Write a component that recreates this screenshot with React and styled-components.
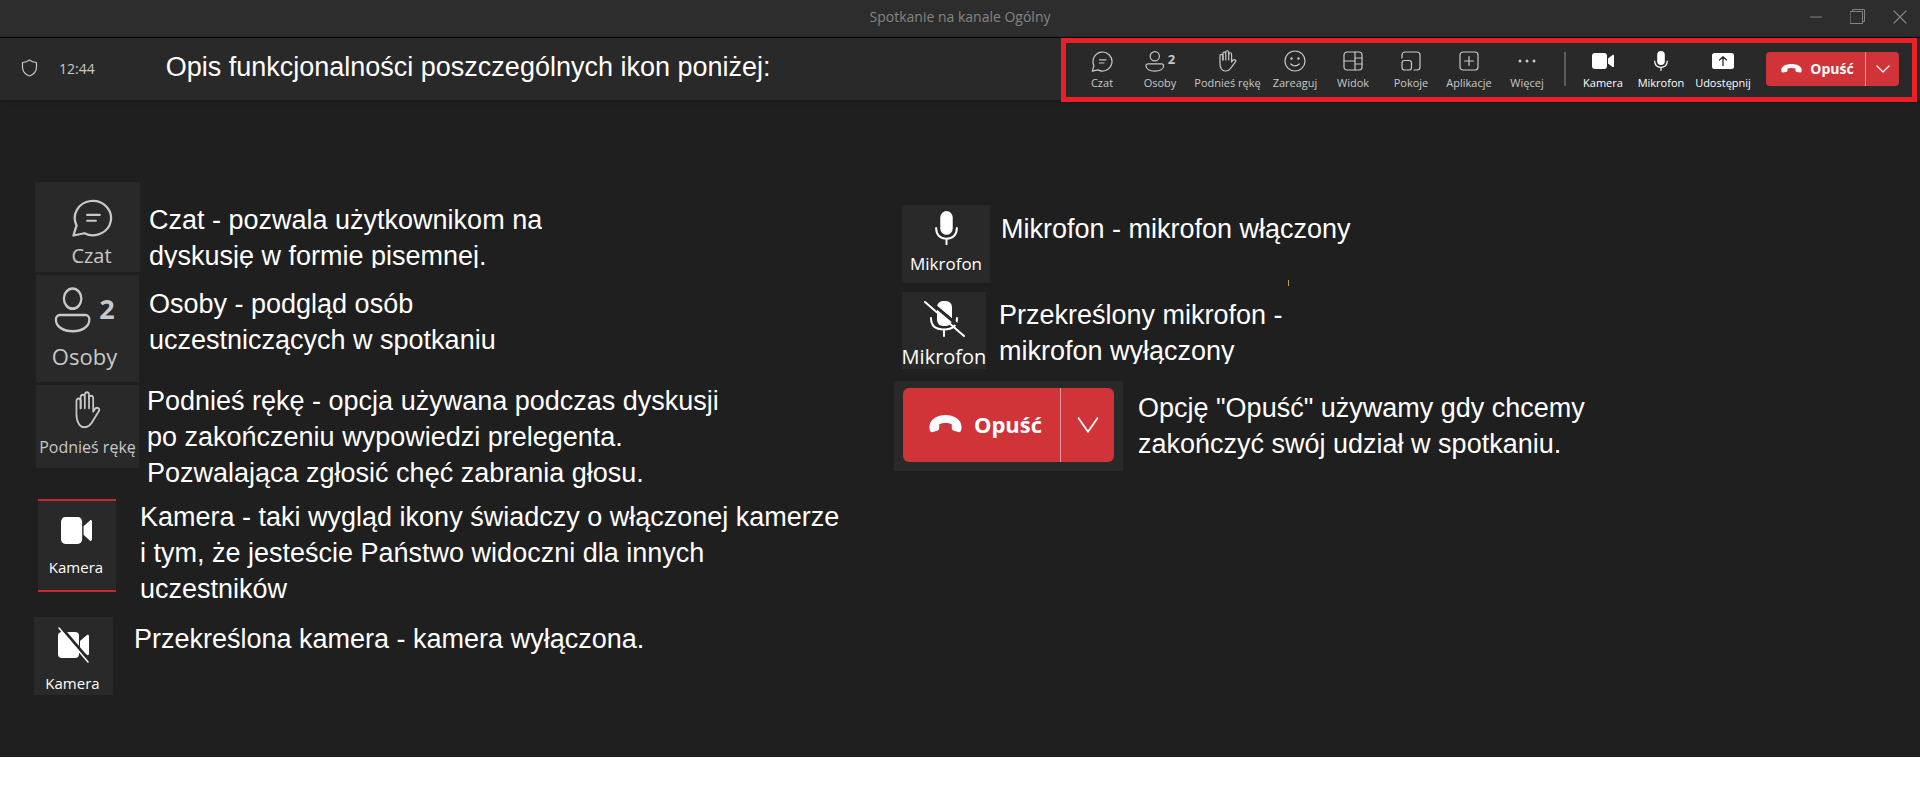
import React from 'react';
import styled, { createGlobalStyle } from 'styled-components';

const GlobalStyle = createGlobalStyle`
  * {
    box-sizing: border-box;
  }
  body {
    margin: 0;
    background: #ffffff;
    font-family: 'Open Sans', 'Noto Sans', sans-serif;
  }
  button {
    margin: 0;
    padding: 0;
    border: 0;
    background: none;
    color: inherit;
    font-family: inherit;
  }
`;

const Window = styled.div`
  background: #1f1f1f;
  color: #ffffff;
`;

const TitleBar = styled.header`
  display: grid;
  grid-template-columns: 1fr auto 1fr;
  align-items: center;
  height: 38px;
  padding: 0 12px;
  background: #2d2d2d;
  border-bottom: 1px solid #000000;
`;

const WindowTitle = styled.span`
  grid-column: 2;
  padding-bottom: 4px;
  font-size: 14px;
  line-height: 20px;
  color: #848484;
`;

const WindowButtons = styled.div`
  display: flex;
  justify-content: flex-end;
  align-items: center;
  gap: 26px;
  padding-bottom: 4px;
  color: #848484;
`;

const WindowButton = styled.button`
  display: flex;
  width: 16px;
  height: 16px;
  align-items: center;
  justify-content: center;
`;

const MeetingBar = styled.div`
  position: relative;
  z-index: 1;
  display: flex;
  align-items: flex-start;
  height: 62px;
  padding: 0 3px 0 21px;
  background: #292929;
  box-shadow: 0 1px 4px rgba(0, 0, 0, 0.3);
`;

const Status = styled.div`
  display: flex;
  align-items: center;
  height: 60px;
  gap: 21px;
  color: #c8c8c8;
  font-size: 14px;
`;

const Heading = styled.h1`
  flex: 1;
  margin: 0 0 0 71px;
  font-family: 'Liberation Sans', Arial, sans-serif;
  font-size: 27px;
  font-weight: 400;
  line-height: 58px;
`;

const Toolbar = styled.nav`
  display: flex;
  align-items: flex-start;
  height: 64px;
  padding: 9px 13px 0 7px;
  border: 5px solid #e92027;
`;

const Tool = styled.button`
  display: flex;
  flex-direction: column;
  align-items: center;
  gap: 2px;
  margin-top: -3px;
  width: ${({ $width }) => $width || 58}px;
  color: ${({ $active }) => ($active ? '#ffffff' : '#c8c8c8')};
  font-size: 11px;
  font-weight: ${({ $active }) => ($active ? 500 : 400)};
  line-height: 16px;
  white-space: nowrap;
`;

const ToolIcon = styled.span`
  display: flex;
  align-items: center;
  justify-content: center;
  gap: 3px;
  height: 24px;
`;

const Count = styled.b`
  padding-bottom: 3px;
  font-size: ${({ $size }) => $size || 13}px;
  font-weight: 700;
  line-height: 1;
`;

const Divider = styled.span`
  width: 2px;
  height: 34px;
  margin: 0 8px;
  background: #5c5c5c;
`;

const LeaveGroup = styled.div`
  display: flex;
  height: ${({ $large }) => ($large ? 74 : 34)}px;
  margin-left: ${({ $large }) => ($large ? 0 : 10)}px;
  border-radius: ${({ $large }) => ($large ? 6 : 4)}px;
  background: #d13438;
  overflow: hidden;
`;

const LeaveButton = styled.button`
  display: flex;
  align-items: center;
  justify-content: center;
  gap: ${({ $large }) => ($large ? 12 : 8)}px;
  width: ${({ $large }) => ($large ? 157 : 99)}px;
  padding-left: ${({ $large }) => ($large ? 8 : 4)}px;
  padding-bottom: 2px;
  font-size: ${({ $large }) => ($large ? 22 : 14)}px;
  font-weight: 700;
`;

const LeaveMenu = styled.button`
  display: flex;
  align-items: center;
  justify-content: center;
  width: ${({ $large }) => ($large ? 54 : 34)}px;
  border-left: 1px solid #ee9a9c;
`;

const Legend = styled.main`
  display: grid;
  grid-template-columns: 860fr 1026fr;
  padding: 82px 0 62px 34px;
`;

const Column = styled.ul`
  margin: 0;
  padding: ${({ $top }) => $top || 0}px 0 0;
  list-style: none;
`;

const Entry = styled.li`
  display: flex;
  align-items: flex-start;
  padding-left: ${({ $indent }) => $indent || 0}px;
  margin-bottom: ${({ $after }) => $after || 0}px;
`;

const Tile = styled.div`
  display: flex;
  flex: none;
  flex-direction: column;
  align-items: center;
  width: ${({ $width }) => $width}px;
  height: ${({ $height }) => $height}px;
  padding-top: ${({ $pad }) => $pad}px;
  padding-left: ${({ $left }) => $left || 0}px;
  padding-right: ${({ $right }) => $right || 0}px;
  margin-top: ${({ $drop }) => $drop || 0}px;
  background: #292929;
  color: ${({ $active }) => ($active ? '#ffffff' : '#c8c8c8')};
  border: solid #c9282d;
  border-width: ${({ $framed }) => ($framed ? '2px 0' : 0)};
`;

const TileIcon = styled.span`
  display: flex;
  align-items: center;
  gap: 7px;
`;

const TileLabel = styled.span`
  margin-top: ${({ $gap }) => $gap}px;
  font-size: ${({ $size }) => $size}px;
  font-weight: ${({ $bold }) => ($bold ? 500 : 400)};
  line-height: 24px;
  white-space: nowrap;
`;

const Description = styled.p`
  position: relative;
  margin: ${({ $top }) => $top || 0}px 0 0 ${({ $left }) => $left}px;
  height: ${({ $clip }) => ($clip ? `${$clip}px` : 'auto')};
  overflow: ${({ $clip }) => ($clip ? 'hidden' : 'visible')};
  font-family: 'Liberation Sans', Arial, sans-serif;
  font-size: 27px;
  line-height: 36px;
  white-space: pre-line;
`;

// small marker under the "mikrofon włączony" text
const Caret = styled.i`
  position: absolute;
  left: 287px;
  top: 69px;
  width: 1px;
  height: 6px;
  background: #c89a3c;
`;

const Icon = ({ box, width, height, stroke = 1.2, children }) => {
  const [w, h] = box;
  return (
    <svg
      width={width || w}
      height={height || h}
      viewBox={`0 0 ${w} ${h}`}
      preserveAspectRatio="none"
      fill="none"
      stroke="currentColor"
      strokeWidth={stroke}
      strokeLinecap="round"
      strokeLinejoin="round"
      aria-hidden="true"
    >
      {children}
    </svg>
  );
};

const ShieldIcon = () => (
  <Icon box={[17, 18]}>
    <path d="M8.5 1C6.5 2.6 4.2 3.3 1.5 3.5V8c0 4.3 2.5 7.3 7 9 4.5-1.7 7-4.7 7-9V3.5C12.8 3.3 10.5 2.6 8.5 1z" />
  </Icon>
);

const ChatIcon = (props) => (
  <Icon box={[22, 21]} {...props}>
    <path d="M2.9 14.6A9.5 9.5 0 1 1 7 18.9L1.3 20.2Z" />
    <path d="M8.5 8.8H15M8.5 12H13" />
  </Icon>
);

const PeopleIcon = (props) => (
  <Icon box={[20, 21]} {...props}>
    <circle cx="9.8" cy="5.3" r="4.6" />
    <path d="M3 12.8h13.6a2 2 0 0 1 2 2c0 3.5-4 5.4-8.8 5.4S1 18.3 1 14.8a2 2 0 0 1 2-2z" />
  </Icon>
);

const HandIcon = (props) => (
  <Icon box={[18, 22]} {...props}>
    <path d="M3.9 10V5.8a1.45 1.45 0 0 0-2.9 0V13c0 5 2.3 8 5.5 8 3.2 0 4.7-1.6 6.2-4.2l4-5.4c.7-1.3-1.3-2.3-2.6-1.3L12.6 12V4.2a1.45 1.45 0 0 0-2.9 0" />
    <path d="M3.9 10V3.6a1.45 1.45 0 0 1 2.9 0V10M6.8 10V2.2a1.45 1.45 0 0 1 2.9 0V10" />
  </Icon>
);

const SmileIcon = () => (
  <Icon box={[22, 22]}>
    <circle cx="11" cy="11" r="10" />
    <circle cx="7.5" cy="8.5" r="1.2" fill="currentColor" stroke="none" />
    <circle cx="14.5" cy="8.5" r="1.2" fill="currentColor" stroke="none" />
    <path d="M6.8 14c2.2 2.6 6.2 2.6 8.4 0" />
  </Icon>
);

const ViewIcon = () => (
  <Icon box={[20, 20]}>
    <rect x="1" y="1" width="18" height="18" rx="3" />
    <path d="M12 1V19M1 10H12M12 7H19M12 13H19" />
  </Icon>
);

const RoomsIcon = () => (
  <Icon box={[20, 20]}>
    <path d="M1 7V4a3 3 0 0 1 3-3h12a3 3 0 0 1 3 3v12a3 3 0 0 1-3 3h-3" />
    <rect x="1" y="9.5" width="9.5" height="9.5" rx="2.5" />
  </Icon>
);

const AppsIcon = () => (
  <Icon box={[20, 20]}>
    <rect x="1" y="1" width="18" height="18" rx="3" />
    <path d="M10 5.5V14.5M5.5 10H14.5" />
  </Icon>
);

const MoreIcon = () => (
  <Icon box={[18, 4]}>
    <g fill="currentColor" stroke="none">
      <circle cx="2" cy="2" r="1.5" />
      <circle cx="9" cy="2" r="1.5" />
      <circle cx="16" cy="2" r="1.5" />
    </g>
  </Icon>
);

const CameraIcon = (props) => (
  <Icon box={[22, 16]} {...props}>
    <g fill="currentColor" stroke="none">
      <rect width="15" height="16" rx="3" />
      <path d="M16 5.5 20.6 2c.6-.4 1.4 0 1.4.7v10.6c0 .7-.8 1.1-1.4.7L16 10.5z" />
    </g>
  </Icon>
);

const CameraOffIcon = (props) => (
  <Icon box={[32, 37]} {...props}>
    <g fill="currentColor" stroke="none">
      <rect x="1" y="6" width="21" height="26" rx="4" />
      <path d="M23 15l7-6c.7-.5 2 0 2 1v18c0 1-1.3 1.5-2 1l-7-6z" />
    </g>
    <path d="M3 0 32 34" stroke="#292929" strokeWidth="3" />
    <path d="M2 2 31 36" strokeWidth="1.5" />
  </Icon>
);

const MicIcon = (props) => (
  <Icon box={[14, 20]} {...props}>
    <rect x="3.2" y="0" width="7.6" height="14" rx="3.8" fill="currentColor" stroke="none" />
    <path d="M.7 10c0 4.2 2.6 6.3 6.3 6.3s6.3-2.1 6.3-6.3M7 16.5V19.5" />
  </Icon>
);

const MicOffIcon = (props) => (
  <Icon box={[43, 37]} {...props}>
    <rect x="14" y="1" width="15" height="25" rx="6" fill="currentColor" stroke="none" />
    <path d="M8 18c0 8 5 11.5 13 11.5S34 26 34 18M21 30V36" strokeWidth="2" />
    <path d="M5 0 43 32" stroke="#292929" strokeWidth="3" />
    <path d="M2 2 41 36" strokeWidth="2" />
  </Icon>
);

const ShareIcon = () => (
  <Icon box={[22, 16]}>
    <rect width="22" height="16" rx="2.5" fill="currentColor" stroke="none" />
    <path d="M11 12.5V4M7.5 7 11 3.7 14.5 7" stroke="#292929" strokeWidth="1.3" />
  </Icon>
);

const PhoneIcon = (props) => (
  <Icon box={[21, 9]} {...props}>
    <path
      d="M10.5 0C5.5 0 .3 2 .3 6c0 1.4.4 2.7 1.5 2.6l3.4-.7c.9-.2 1.3-.7 1.3-1.5V4.6c2.2-.8 5.8-.8 8 0v1.8c0 .8.4 1.3 1.3 1.5l3.4.7c1.1.1 1.5-1.2 1.5-2.6 0-4-5.2-6-10.2-6z"
      fill="currentColor"
      stroke="none"
    />
  </Icon>
);

const ChevronIcon = (props) => (
  <Icon box={[14, 8]} {...props}>
    <path d="M1 1 7 7 13 1" />
  </Icon>
);

const tools = [
  { label: 'Czat', icon: <ChatIcon /> },
  { label: 'Osoby', icon: <PeopleIcon />, count: 2 },
  { label: 'Podnieś rękę', icon: <HandIcon />, width: 77 },
  { label: 'Zareaguj', icon: <SmileIcon /> },
  { label: 'Widok', icon: <ViewIcon /> },
  { label: 'Pokoje', icon: <RoomsIcon /> },
  { label: 'Aplikacje', icon: <AppsIcon /> },
  { label: 'Więcej', icon: <MoreIcon /> },
];

const devices = [
  { label: 'Kamera', icon: <CameraIcon /> },
  { label: 'Mikrofon', icon: <MicIcon /> },
  { label: 'Udostępnij', icon: <ShareIcon />, width: 66 },
];

const ToolButton = ({ label, icon, count, width, active }) => (
  <Tool type="button" $width={width} $active={active}>
    <ToolIcon>
      {icon}
      {count && <Count>{count}</Count>}
    </ToolIcon>
    {label}
  </Tool>
);

const Leave = ({ large }) => (
  <LeaveGroup $large={large}>
    <LeaveButton type="button" $large={large}>
      {large ? <PhoneIcon width={33} height={18} /> : <PhoneIcon />}
      Opuść
    </LeaveButton>
    <LeaveMenu type="button" $large={large} aria-label="Więcej opcji">
      {large ? <ChevronIcon width={22} height={18} stroke={1} /> : <ChevronIcon />}
    </LeaveMenu>
  </LeaveGroup>
);

const App = () => {
  return (
    <Window>
      <GlobalStyle />
      <TitleBar>
        <WindowTitle>Spotkanie na kanale Ogólny</WindowTitle>
        <WindowButtons>
          <WindowButton type="button" aria-label="Minimalizuj">
            <Icon box={[12, 2]}><path d="M0 1H12" /></Icon>
          </WindowButton>
          <WindowButton type="button" aria-label="Przywróć">
            <Icon box={[16, 16]} stroke={1}>
              <path d="M.5 2.5H12.5V14.5H.5ZM2.5 2.5V.5H14.5V12.5H12.5" />
            </Icon>
          </WindowButton>
          <WindowButton type="button" aria-label="Zamknij">
            <Icon box={[14, 14]}><path d="M1 1 13 13M13 1 1 13" /></Icon>
          </WindowButton>
        </WindowButtons>
      </TitleBar>

      <MeetingBar>
        <Status>
          <ShieldIcon />
          <time>12:44</time>
        </Status>
        <Heading>Opis funkcjonalności poszczególnych ikon poniżej:</Heading>
        <Toolbar>
          {tools.map((tool) => <ToolButton key={tool.label} {...tool} />)}
          <Divider />
          {devices.map((tool) => <ToolButton key={tool.label} active {...tool} />)}
          <Leave />
        </Toolbar>
      </MeetingBar>

      <Legend>
        <Column>
          <Entry $indent={1} $after={3}>
            <Tile $width={105} $height={90} $pad={17} $left={8}>
              <ChatIcon width={42} height={38} />
              <TileLabel $gap={7} $size={20}>Czat</TileLabel>
            </Tile>
            <Description $left={9} $top={20} $clip={66}>
              {'Czat - pozwala użytkownikom na\ndyskusję w formie pisemnej.'}
            </Description>
          </Entry>
          <Entry $indent={2} $after={1}>
            <Tile $width={103} $height={107} $pad={12} $right={6}>
              <TileIcon>
                <PeopleIcon width={38} height={46} />
                <Count $size={27}>2</Count>
              </TileIcon>
              <TileLabel $gap={11} $size={22}>Osoby</TileLabel>
            </Tile>
            <Description $left={10} $top={11}>
              {'Osoby - podgląd osób\nuczestniczących w spotkaniu'}
            </Description>
          </Entry>
          <Entry $indent={2} $after={8}>
            <Tile $width={103} $height={83} $pad={6} $drop={2}>
              <HandIcon width={26} height={38} />
              <TileLabel $gap={6} $size={16}>Podnieś rękę</TileLabel>
            </Tile>
            <Description $left={8}>
              {'Podnieś rękę - opcja używana podczas dyskusji\npo zakończeniu wypowiedzi prelegenta.\nPozwalająca zgłosić chęć zabrania głosu.'}
            </Description>
          </Entry>
          <Entry $indent={4} $after={10}>
            <Tile $width={78} $height={93} $pad={16} $right={2} $active $framed>
              <CameraIcon width={31} height={27} />
              <TileLabel $gap={11} $size={15} $bold>Kamera</TileLabel>
            </Tile>
            <Description $left={24}>
              {'Kamera - taki wygląd ikony świadczy o włączonej kamerze\ni tym, że jesteście Państwo widoczni dla innych\nuczestników'}
            </Description>
          </Entry>
          <Entry>
            <Tile $width={79} $height={78} $pad={9} $right={2} $active>
              <CameraOffIcon />
              <TileLabel $gap={8} $size={15} $bold>Kamera</TileLabel>
            </Tile>
            <Description $left={21} $top={4}>
              Przekreślona kamera - kamera wyłączona.
            </Description>
          </Entry>
        </Column>

        <Column $top={23}>
          <Entry $indent={8} $after={9}>
            <Tile $width={88} $height={78} $pad={6} $active>
              <MicIcon width={23} height={34} />
              <TileLabel $gap={7} $size={17} $bold>Mikrofon</TileLabel>
            </Tile>
            <Description $left={11} $top={6}>
              Mikrofon - mikrofon włączony
              <Caret />
            </Description>
          </Entry>
          <Entry $indent={8} $after={12}>
            <Tile $width={84} $height={77} $pad={8} $active>
              <MicOffIcon />
              <TileLabel $gap={8} $size={20} $bold>Mikrofon</TileLabel>
            </Tile>
            <Description $left={13} $top={5} $clip={67}>
              {'Przekreślony mikrofon -\nmikrofon wyłączony'}
            </Description>
          </Entry>
          <Entry>
            <Tile $width={229} $height={90} $pad={7} $active>
              <Leave large />
            </Tile>
            <Description $left={15} $top={9}>
              {'Opcję "Opuść" używamy gdy chcemy\nzakończyć swój udział w spotkaniu.'}
            </Description>
          </Entry>
        </Column>
      </Legend>
    </Window>
  );
};

export default App;
